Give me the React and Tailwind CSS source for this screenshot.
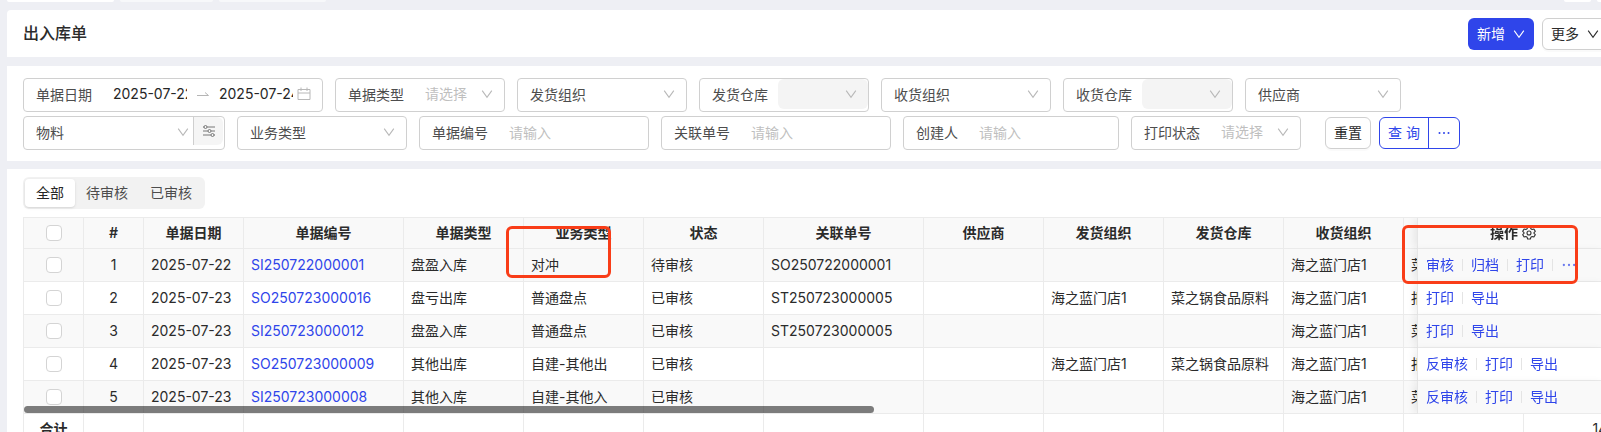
import React from "react";

const LINE = "border-[#ebebeb]";

function Chevron({ className = "" }) {
  return (
    <svg viewBox="0 0 12 12" className={`pointer-events-none size-3 shrink-0 ${className}`} fill="none" stroke="currentColor" strokeWidth="1.1" aria-hidden="true">
      <path d="M1.2 2.6 6 9.2l4.8-6.6" />
    </svg>
  );
}

function Field({ id, label, width, children }) {
  return (
    <div className={`flex h-[34px] items-center rounded border border-[#d0d0d0] pl-3 ${width}`}>
      <label htmlFor={id} className="shrink-0 text-[#4d4d4d]">{label}</label>
      {children}
    </div>
  );
}

function SelectField({ id, label, width = "w-[170px]", placeholder = "", disabled = false }) {
  return (
    <Field id={id} label={label} width={width}>
      <div className="relative mb-0.5 ml-2.5 h-[30px] min-w-0 flex-1">
        <select
          id={id}
          disabled={disabled}
          className="h-full w-full appearance-none rounded-md bg-transparent pl-[11px] pr-6 text-[#bfbfbf] opacity-100 outline-none disabled:bg-[#f4f4f4]"
        >
          <option>{placeholder}</option>
        </select>
        <Chevron className="absolute right-[11px] top-[9px] text-[#b8b8b8]" />
      </div>
    </Field>
  );
}

function InputField({ id, label, width = "w-[230px]" }) {
  return (
    <Field id={id} label={label} width={width}>
      <input
        id={id}
        type="text"
        placeholder="请输入"
        className="mb-0.5 ml-2.5 h-[30px] min-w-0 flex-1 bg-transparent px-[11px] outline-none placeholder:text-[#bfbfbf]"
      />
    </Field>
  );
}

function DateField() {
  return (
    <Field id="date-from" label="单据日期" width="w-[300px]">
      <div className="mb-0.5 ml-[21px] mr-[11px] flex min-w-0 flex-1 items-center">
        <input id="date-from" type="text" defaultValue="2025-07-22" className="w-0 min-w-0 flex-1 bg-transparent text-[#262626] outline-none" />
        <svg viewBox="0 0 12 12" className="mx-2.5 size-3 shrink-0" fill="none" stroke="#b5b5b5" aria-hidden="true">
          <path d="M0 7.5h11.5L8 4.5" />
        </svg>
        <input aria-label="结束日期" type="text" defaultValue="2025-07-24" className="w-0 min-w-0 flex-1 bg-transparent text-[#262626] outline-none" />
        <svg viewBox="0 0 14 14" className="ml-1 size-3.5 shrink-0" fill="none" stroke="#b8b8b8" aria-hidden="true">
          <path d="M1 2.5h12v10H1zM1 6h12M4 .5v3.5M10 .5v3.5" />
        </svg>
      </div>
    </Field>
  );
}

function MaterialField() {
  return (
    <Field id="material" label="物料" width="w-[202px]">
      <div className="relative mb-0.5 ml-2.5 h-[30px] min-w-0 flex-1">
        <select id="material" className="h-full w-full appearance-none bg-transparent pl-[11px] pr-6 outline-none">
          <option></option>
        </select>
        <Chevron className="absolute right-1 top-[9px] text-[#b8b8b8]" />
      </div>
      <button type="button" aria-label="物料筛选" className="mb-1 mr-px flex h-7 w-[30px] items-center justify-center rounded-r-md border-l border-[#cfcfcf] bg-[#f5f5f5]">
        <svg viewBox="0 0 14 14" className="size-3.5" fill="none" stroke="#777" aria-hidden="true">
          <path d="M1 3h1M5 3h8M1 7h5M9 7h4M1 11h8M12 11h1" />
          <circle cx="3.5" cy="3" r="1.5" />
          <circle cx="7.5" cy="7" r="1.5" />
          <circle cx="10.5" cy="11" r="1.5" />
        </svg>
      </button>
    </Field>
  );
}

const columns = [
  { title: "", w: "w-[60px]" },
  { title: "#", w: "w-[60px]" },
  { title: "单据日期", w: "w-[100px]" },
  { title: "单据编号", w: "w-[160px]" },
  { title: "单据类型", w: "w-[120px]" },
  { title: "业务类型", w: "w-[120px]" },
  { title: "状态", w: "w-[120px]" },
  { title: "关联单号", w: "w-[160px]" },
  { title: "供应商", w: "w-[120px]" },
  { title: "发货组织", w: "w-[120px]" },
  { title: "发货仓库", w: "w-[120px]" },
  { title: "收货组织", w: "w-[120px]" },
  { title: "收货仓库", w: "w-[120px]" },
  { title: "数量", w: "w-[100px]" },
];

const rows = [
  { date: "2025-07-22", code: "SI250722000001", cells: ["盘盈入库", "对冲", "待审核", "SO250722000001", "", "", "", "海之蓝门店1", "菜之锅食品原料"], actions: ["审核", "归档", "打印", "···"] },
  { date: "2025-07-23", code: "SO250723000016", cells: ["盘亏出库", "普通盘点", "已审核", "ST250723000005", "", "海之蓝门店1", "菜之锅食品原料", "海之蓝门店1", "报损仓"], actions: ["打印", "导出"] },
  { date: "2025-07-23", code: "SI250723000012", cells: ["盘盈入库", "普通盘点", "已审核", "ST250723000005", "", "", "", "海之蓝门店1", "菜之锅食品原料"], actions: ["打印", "导出"] },
  { date: "2025-07-23", code: "SO250723000009", cells: ["其他出库", "自建-其他出", "已审核", "", "", "海之蓝门店1", "菜之锅食品原料", "海之蓝门店1", "报损仓"], actions: ["反审核", "打印", "导出"] },
  { date: "2025-07-23", code: "SI250723000008", cells: ["其他入库", "自建-其他入", "已审核", "", "", "", "", "海之蓝门店1", "菜之锅食品原料"], actions: ["反审核", "打印", "导出"] },
];

const cell = `border-b border-r ${LINE} overflow-hidden whitespace-nowrap px-[7px] py-0`;
const fixed = "sticky right-0 z-10 border-b border-[#ebebeb] px-2 py-0 shadow-[-1px_0_0_#e6e6e6,-6px_0_8px_-2px_rgba(0,0,0,0.08)]";

function Check({ label }) {
  return (
    <input type="checkbox" aria-label={label} className="block size-4 mx-auto appearance-none rounded border border-[#d4d4d4] bg-white checked:bg-[#2f45ea]" />
  );
}

function Actions({ items }) {
  return (
    <div className="flex items-center">
      {items.map((text, i) => (
        <React.Fragment key={text}>
          {i > 0 && <span className="mx-2 h-3 w-px bg-[#e4e4e4]" />}
          <a href="#" aria-label={text === "···" ? "更多操作" : undefined} className="text-[#2f45ea]">
            {text === "···" ? <Dots className="size-4 opacity-70" /> : text}
          </a>
        </React.Fragment>
      ))}
    </div>
  );
}

function Dots({ className = "size-3.5" }) {
  return (
    <svg viewBox="0 0 14 14" className={className} fill="currentColor" aria-hidden="true">
      <circle cx="2.5" cy="7" r="1" />
      <circle cx="7" cy="7" r="1" />
      <circle cx="11.5" cy="7" r="1" />
    </svg>
  );
}

function Gear() {
  return (
    <svg viewBox="0 0 14 14" className="size-3.5" fill="none" stroke="#333" strokeWidth="1.1" strokeLinejoin="round" aria-hidden="true">
      <path d="M5.6 1h2.8l.5 1.8 1.2.7 1.8-.5 1.4 2.4L12 6.7v.6l1.3 1.3-1.4 2.4-1.8-.5-1.2.7-.5 1.8H5.6l-.5-1.8-1.2-.7-1.8.5L.7 8.600 2 7.300v-.6L.7 5.400 2.100 3l1.800.5 1.200-.7z" />
      <circle cx="7" cy="7" r="2" />
    </svg>
  );
}

function Cols() {
  return (
    <colgroup>
      {columns.map((c, i) => <col key={i} className={c.w} />)}
      <col className="w-[190px]" />
    </colgroup>
  );
}

function DocumentTable() {
  return (
    <div className={`relative mt-2 border-l border-t ${LINE}`}>
      <div className="overflow-hidden">
        <table className="w-[1790px] table-fixed border-separate border-spacing-0">
          <Cols />
          <thead>
            <tr className="h-[31px] bg-[#f9f9f9]">
              {columns.map((c, i) => (
                <th key={i} className={`${cell} font-semibold`}>{i === 0 ? <Check label="全选" /> : c.title}</th>
              ))}
              <th className={`${fixed} bg-[#f9f9f9] font-semibold`}>
                <div className="flex items-center justify-center gap-1">
                  操作
                  <button type="button" aria-label="列设置"><Gear /></button>
                </div>
              </th>
            </tr>
          </thead>
          <tbody>
            {rows.map((r, i) => (
              <tr key={r.code} className="h-[33px] bg-white odd:bg-[#f9f9f9]">
                <td className={cell}><Check label={`选择 ${r.code}`} /></td>
                <td className={`${cell} text-center`}>{i + 1}</td>
                <td className={cell}>{r.date}</td>
                <td className={cell}><a href="#" className="text-[#2f45ea]">{r.code}</a></td>
                {r.cells.map((text, j) => <td key={j} className={cell}>{text}</td>)}
                <td className={cell}></td>
                <td className={`${fixed} bg-inherit`}><Actions items={r.actions} /></td>
              </tr>
            ))}
          </tbody>
        </table>
      </div>
      <div className="absolute bottom-8 left-0 z-20 h-[7px] w-[850px] rounded-full bg-black/50" />
      <div className="overflow-hidden">
        <table className="w-[1790px] table-fixed border-separate border-spacing-0">
          <Cols />
          <tbody>
            <tr className="h-[31px]">
              <th scope="row" className={`${cell} font-semibold`}>合计</th>
              {columns.slice(1, -1).map((c) => <td key={c.title} className={cell}></td>)}
              <td className={`${cell} text-right`}>146</td>
              <td className={cell}></td>
            </tr>
          </tbody>
        </table>
      </div>
      <div className="pointer-events-none absolute left-[482px] top-2 z-30 h-[52px] w-[105px] rounded-md border-[3px] border-[#f93d18]" />
      <div className="pointer-events-none absolute left-[1378px] top-[7px] z-30 h-[59px] w-[176px] rounded-md border-[3px] border-[#f93d18]" />
    </div>
  );
}

export default function App() {
  return (
    <div className="h-screen overflow-hidden bg-[#eeeff4] font-['Inter','Noto_Sans_CJK_SC',sans-serif] text-sm text-[#2b2b2b]">
      <main className="-mr-[23px] pl-[7px]">
        <div className="flex h-0.5 gap-1.5">
          <div className="w-[107px] rounded-b bg-white" />
          <div className="w-[93px] rounded-b bg-[#f7f8fa]" />
          <div className="w-[107px] rounded-b bg-[#f7f8fa]" />
          <div className="ml-auto w-[27px] rounded-b bg-white" />
          <div className="w-[27px] rounded-b bg-white" />
        </div>

        <header className="mt-2 flex h-[47px] items-center justify-between rounded-tl bg-white px-4">
          <h1 className="pb-0.5 text-base font-medium">出入库单</h1>
          <div className="flex gap-2">
            <button type="button" className="flex h-8 items-center gap-2 rounded-md bg-[#2f45ea] px-[9px] text-white">
              新增 <Chevron />
            </button>
            <button type="button" className="flex h-8 items-center gap-2 rounded-md border border-[#d0d0d0] bg-white px-2 shadow-[0_2px_0_rgba(0,0,0,0.02)]">
              更多 <Chevron />
            </button>
          </div>
        </header>

        <form className="mt-[9px] flex flex-wrap gap-x-3 gap-y-1 bg-white px-4 pb-[11px] pt-3">
          <DateField />
          <SelectField id="doc-type" label="单据类型" placeholder="请选择" />
          <SelectField id="ship-org" label="发货组织" />
          <SelectField id="ship-wh" label="发货仓库" disabled />
          <SelectField id="recv-org" label="收货组织" />
          <SelectField id="recv-wh" label="收货仓库" disabled />
          <SelectField id="supplier" label="供应商" width="w-[156px]" />
          <MaterialField />
          <SelectField id="biz-type" label="业务类型" />
          <InputField id="doc-no" label="单据编号" />
          <InputField id="rel-no" label="关联单号" />
          <InputField id="creator" label="创建人" width="w-[216px]" />
          <SelectField id="print" label="打印状态" placeholder="请选择" />
          <div className="ml-3 flex items-center gap-2">
            <button type="reset" className="h-8 rounded-md border border-[#d0d0d0] bg-white px-2 shadow-[0_2px_0_rgba(0,0,0,0.02)]">重置</button>
            <div className="flex h-8 divide-x divide-[#2f45ea] rounded-md border border-[#2f45ea] text-[#2f45ea]">
              <button type="button" className="px-2">查 询</button>
              <button type="button" aria-label="更多查询" className="px-2"><Dots /></button>
            </div>
          </div>
        </form>

        <section className="mt-2 bg-white px-4 pt-2">
          <div className="flex w-fit rounded-md bg-[#f2f2f2] p-0.5 text-[#4d4d4d]">
            <button type="button" aria-pressed="true" className="h-7 rounded bg-white px-[11px] text-[#262626] shadow-sm">全部</button>
            <button type="button" className="h-7 px-[11px]">待审核</button>
            <button type="button" className="h-7 px-[11px]">已审核</button>
          </div>
          <DocumentTable />
        </section>
      </main>
    </div>
  );
}
